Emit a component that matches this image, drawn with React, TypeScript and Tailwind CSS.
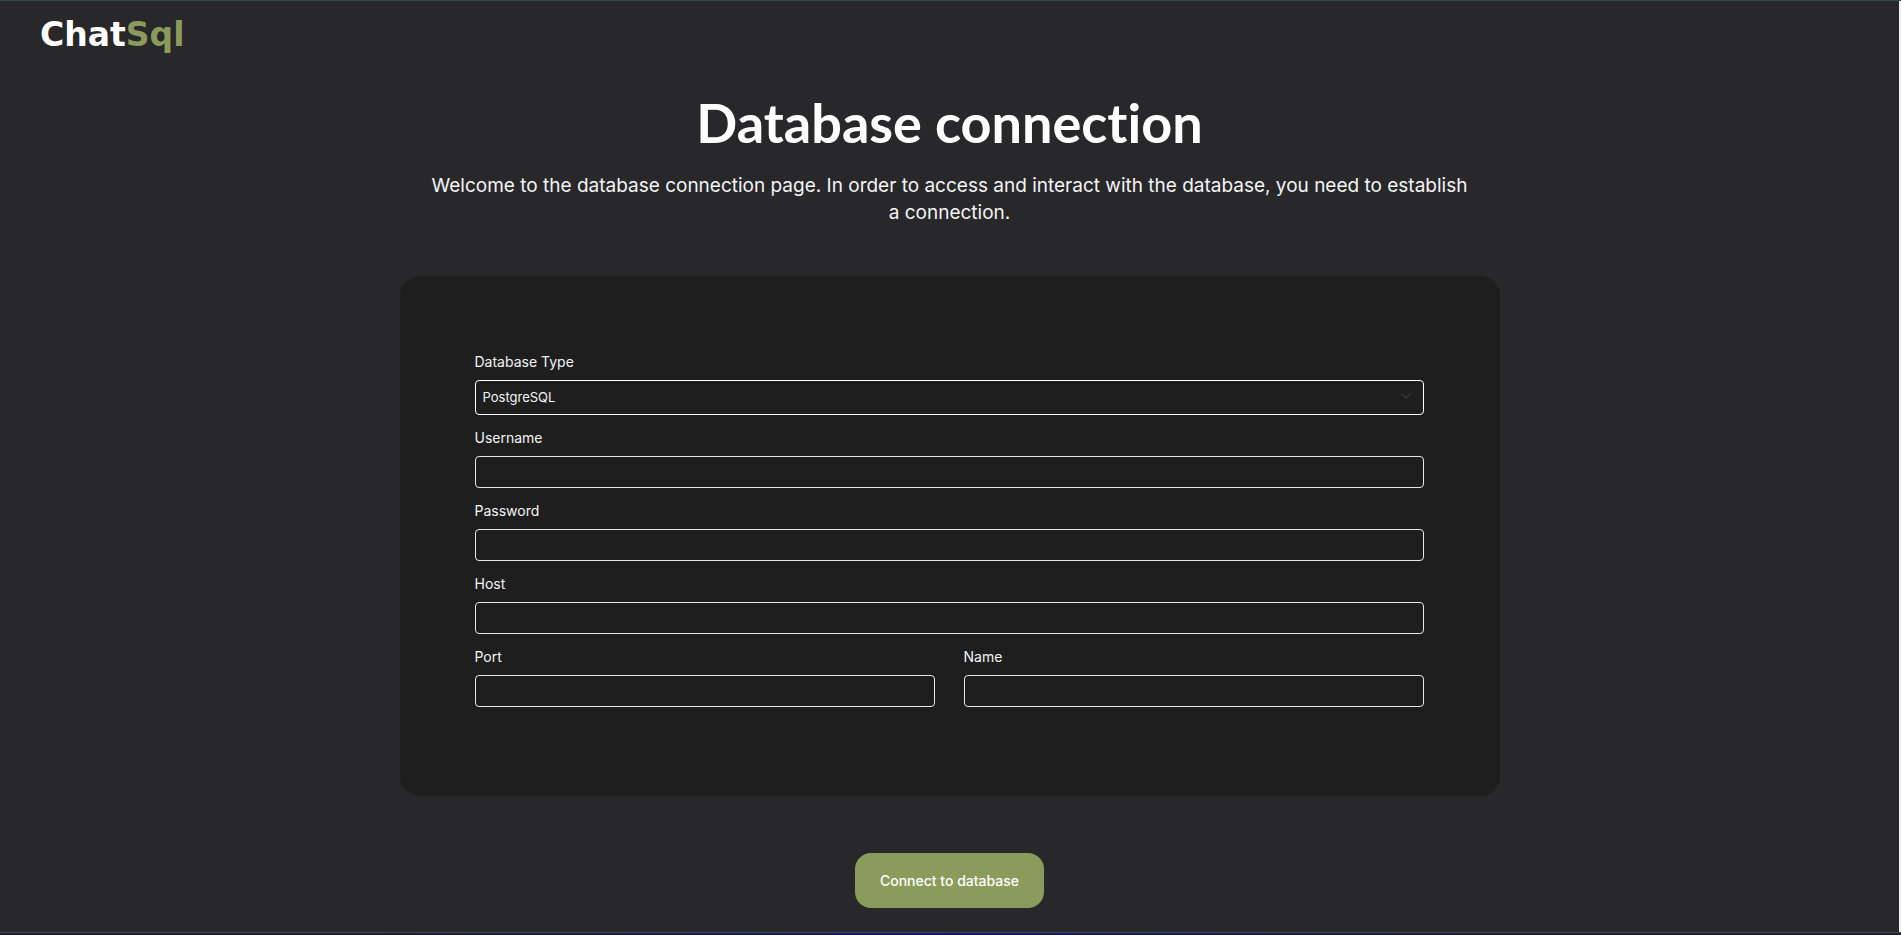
import { useState } from "react";
import type { InputHTMLAttributes } from "react";
import { ChevronDown } from "lucide-react";

const DB_TYPES = ["PostgreSQL", "MySQL", "SQLite"] as const;

type FieldProps = InputHTMLAttributes<HTMLInputElement> & {
  id: string;
  label: string;
};

function Field({ id, label, ...props }: FieldProps) {
  return (
    <div className="min-w-0 flex-1">
      <label htmlFor={id} className="block pb-2 text-sm leading-5">
        {label}
      </label>
      <input
        id={id}
        name={id}
        className="block h-8 w-full rounded border border-gray-200 bg-transparent px-2 outline-none"
        {...props}
      />
    </div>
  );
}

export default function App() {
  const [dbType, setDbType] = useState<string>("PostgreSQL");

  return (
    <div className="flex min-h-screen flex-col border-t border-[#334b4f] bg-[#28282a] font-['Inter',sans-serif] text-[13px] text-gray-100">
      <div className="flex flex-1 flex-col border-r-2 border-[#f3f3f3]">
        <header className="px-10 pt-4">
          <a
            href="/"
            className="block w-fit font-['DejaVu_Sans',sans-serif] text-[33px] leading-9 font-bold text-white"
          >
            Chat<span className="text-[#8b9b5c]">Sql</span>
          </a>
        </header>

        <main className="mx-auto flex w-full max-w-[1100px] flex-1 flex-col items-center">
          <h1 className="mt-[38px] text-center font-['Lato',sans-serif] text-[54px] leading-16 font-bold text-white [font-variant-ligatures:none]">
            Database connection
          </h1>
          <p className="mt-[17px] px-8 text-center text-[19px] leading-[27px]">
            Welcome to the database connection page. In order to access and
            interact with the database, you need to establish a connection.
          </p>

          <form
            id="connection"
            onSubmit={(e) => e.preventDefault()}
            className="mt-[50px] flex w-full flex-col gap-[13px] rounded-[20px] bg-[#1e1e1e] pt-19 pr-19 pb-[89px] pl-[75px]"
          >
            <div>
              <label htmlFor="type" className="block pb-2 text-sm leading-5">
                Database Type
              </label>
              <div className="relative">
                <select
                  id="type"
                  name="type"
                  value={dbType}
                  onChange={(e) => setDbType(e.target.value)}
                  className="block h-[35px] w-full appearance-none rounded border border-white bg-[#1e1e1e] px-[7px] outline-none"
                >
                  {DB_TYPES.map((type) => (
                    <option key={type} value={type}>
                      {type}
                    </option>
                  ))}
                </select>
                <ChevronDown className="pointer-events-none absolute top-2 right-2.5 size-4 text-[#343a40]" />
              </div>
            </div>
            <Field id="username" label="Username" type="text" />
            <Field id="password" label="Password" type="password" />
            <Field id="host" label="Host" type="text" />
            <div className="flex gap-[29px]">
              <Field id="port" label="Port" type="text" />
              <Field id="name" label="Name" type="text" />
            </div>
          </form>

          <button
            type="submit"
            form="connection"
            className="mt-[57px] h-[55px] rounded-2xl bg-[#8b9b5c] px-[25px] text-sm font-medium text-white"
          >
            Connect to database
          </button>
        </main>
      </div>

      <div className="h-[3px] border-t border-[#40444c] bg-linear-to-r from-[#1c1f30] from-20% via-[#121a66] to-[#1e2030] to-80%" />
    </div>
  );
}
